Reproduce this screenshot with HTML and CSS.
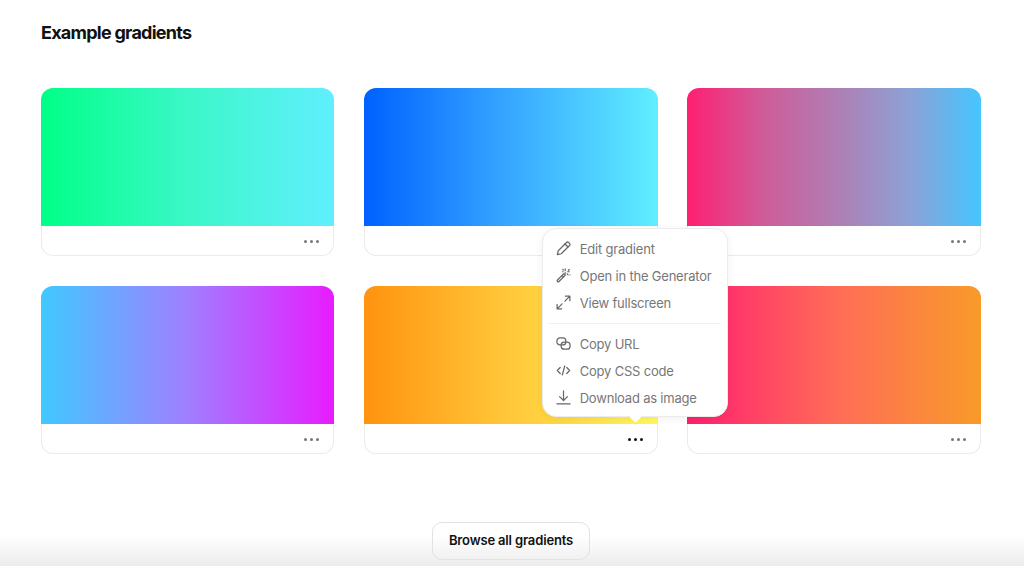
FILE: index.html
```html
<!DOCTYPE html>
<html lang="en">
<head>
    <meta charset="UTF-8">
    <title>Example gradients</title>
    <link rel="stylesheet" href="styles.css">
</head>
<body>
<h2 class="title">Example gradients</h2>

<div class="grid">
    <div class="card">
        <div class="swatch g1"></div>
        <div class="bar"><span class="dots"><i></i><i></i><i></i></span></div>
    </div>
    <div class="card">
        <div class="swatch g2"></div>
        <div class="bar"><span class="dots"><i></i><i></i><i></i></span></div>
    </div>
    <div class="card">
        <div class="swatch g3"></div>
        <div class="bar"><span class="dots"><i></i><i></i><i></i></span></div>
    </div>
    <div class="card">
        <div class="swatch g4"></div>
        <div class="bar"><span class="dots"><i></i><i></i><i></i></span></div>
    </div>
    <div class="card has-menu">
        <div class="swatch g5"></div>
        <div class="bar"><span class="dots active"><i></i><i></i><i></i></span></div>

        <!-- Menu opened from the dots -->
        <div class="menu">
            <div class="menu-item">
                <svg viewBox="0 0 16 16"><path d="M11.2 1.6a1.6 1.6 0 0 1 2.2 0l1 1a1.6 1.6 0 0 1 0 2.2L5.6 13.6l-4.2 1 1-4.2z"/><path d="M9.6 3.2l3.2 3.2"/></svg>
                <span>Edit gradient</span>
            </div>
            <div class="menu-item">
                <svg viewBox="0 0 16 16"><path d="M8.4 6l1.6 1.6-6.8 6.8a1.1 1.1 0 0 1-1.6-1.6z"/><path d="M6.4 8l1.6 1.6"/><path d="M9.8 1v1.8M9.8 5v.8M12.4 4h1.8M14.2 1.4l-1 1M12 6.4l.9.9M15 7.2h.1M7.6 4h-.8M7.2 1.4l.7.7"/></svg>
                <span>Open in the Generator</span>
            </div>
            <div class="menu-item">
                <svg viewBox="0 0 16 16"><path d="M9.5 6.5L14.8 1.2M10 1.2h4.8V6"/><path d="M6.5 9.5l-5.3 5.3M1.2 10v4.8H6"/></svg>
                <span>View fullscreen</span>
            </div>
            <div class="menu-line"></div>
            <div class="menu-item">
                <svg viewBox="0 0 16 16"><rect x="1" y="2" width="9.5" height="7.5" rx="3.2"/><rect x="5.5" y="6.5" width="9.5" height="7.5" rx="3.2"/></svg>
                <span>Copy URL</span>
            </div>
            <div class="menu-item">
                <svg viewBox="0 0 16 16"><path d="M4.5 4.8L1.4 8l3.1 3.2M11.5 4.8L14.6 8l-3.1 3.2M9.3 3.2L6.7 12.8"/></svg>
                <span>Copy CSS code</span>
            </div>
            <div class="menu-item">
                <svg viewBox="0 0 16 16"><path d="M8 1v10M3.8 7L8 11.2 12.2 7M1 14.8h14"/></svg>
                <span>Download as image</span>
            </div>
        </div>
    </div>
    <div class="card">
        <div class="swatch g6"></div>
        <div class="bar"><span class="dots"><i></i><i></i><i></i></span></div>
    </div>
</div>

<div class="browse">
    <button class="browse-btn">Browse all gradients</button>
</div>
<div class="fade"></div>
</body>
</html>
```

FILE: styles.css
```css
html {
    height: 100%;
    overflow: hidden;
}

body {
    margin: 0;
    padding: 23px 43px 0 41px;
    height: 566px;
    box-sizing: border-box;
    overflow: hidden;
    background: #fff;
    font-family: Inter, "Liberation Sans", sans-serif;
    color: #111;
}

.title {
    margin: 0;
    font-size: 18px;
    line-height: 19px;
    font-weight: 700;
    letter-spacing: -0.75px;
}

.grid {
    display: grid;
    grid-template-columns: repeat(3, 293.4px);
    column-gap: 29.8px;
    row-gap: 30px;
    margin-top: 46px;
}

.card {
    position: relative;
    height: 168px;
    box-sizing: border-box;
    border-radius: 12px;
    display: flex;
    flex-direction: column;
}

.swatch {
    height: 138px;
    border-radius: 12px 12px 0 0;
}

.g1 { background: linear-gradient(90deg, #00ff87, #3cf7c8 50%, #60efff); }
.g2 { background: linear-gradient(90deg, #0061ff, #38a8ff 50%, #60efff); }
.g3 { background: linear-gradient(90deg, #ff1f71, #d05a98 25%, #b07db2 50%, #8ea0d4 75%, #45c6ff); }
.g4 { background: linear-gradient(90deg, #40c9ff, #a07fff 50%, #e81cff); }
.g5 { background: linear-gradient(90deg, #ff930f, #ffc83a 50%, #fff95b); }
.g6 { background: linear-gradient(90deg, #ff1f71, #ff6b58 50%, #f89b29); }

.bar {
    flex: 1;
    display: flex;
    align-items: center;
    justify-content: flex-end;
    padding: 2px 14px 0 0;
    border: 1px solid #ebebeb;
    border-top: none;
    border-radius: 0 0 12px 12px;
    background: #fff;
}

.dots {
    display: flex;
    gap: 3px;
}

.dots i {
    width: 3px;
    height: 3px;
    border-radius: 50%;
    background: #777;
}

.dots.active i {
    background: #111;
}

/* Popup menu */
.menu {
    position: absolute;
    left: 177.5px;
    bottom: 37px;
    width: 186px;
    height: 189px;
    box-sizing: border-box;
    padding: 6px 6px 0;
    background: #fff;
    border: 1px solid #ececec;
    border-radius: 14px;
    box-shadow: 0 2px 8px rgba(0, 0, 0, 0.06);
    z-index: 2;
}

.menu::after {
    content: "";
    position: absolute;
    left: 88px;
    bottom: -5px;
    width: 9px;
    height: 9px;
    background: #fff;
    transform: rotate(45deg);
    border-radius: 2px;
}

.menu-item {
    display: flex;
    align-items: center;
    gap: 9px;
    height: 27px;
    padding-left: 7px;
    font-size: 13px;
    letter-spacing: -0.2px;
    color: #777;
}

.menu-item svg {
    width: 15px;
    height: 15px;
    fill: none;
    stroke: #666;
    stroke-width: 1.3;
    stroke-linecap: round;
    stroke-linejoin: round;
    flex: none;
}

.menu-line {
    height: 1px;
    margin: 7px 0 6px;
    background: #f0f0f0;
}

.browse {
    display: flex;
    justify-content: center;
    margin-top: 68px;
    position: relative;
    z-index: 1;
}

.browse-btn {
    width: 158px;
    height: 38px;
    padding: 0 0 2px;
    border: 1px solid #e2e2e2;
    border-radius: 10px;
    background: transparent;
    font-family: inherit;
    font-size: 13px;
    font-weight: 600;
    letter-spacing: -0.15px;
    color: #111;
}

.fade {
    position: absolute;
    left: 0;
    right: 0;
    top: 536px;
    height: 30px;
    background: linear-gradient(180deg, rgba(235, 235, 235, 0), #ececec);
    pointer-events: none;
}
```
